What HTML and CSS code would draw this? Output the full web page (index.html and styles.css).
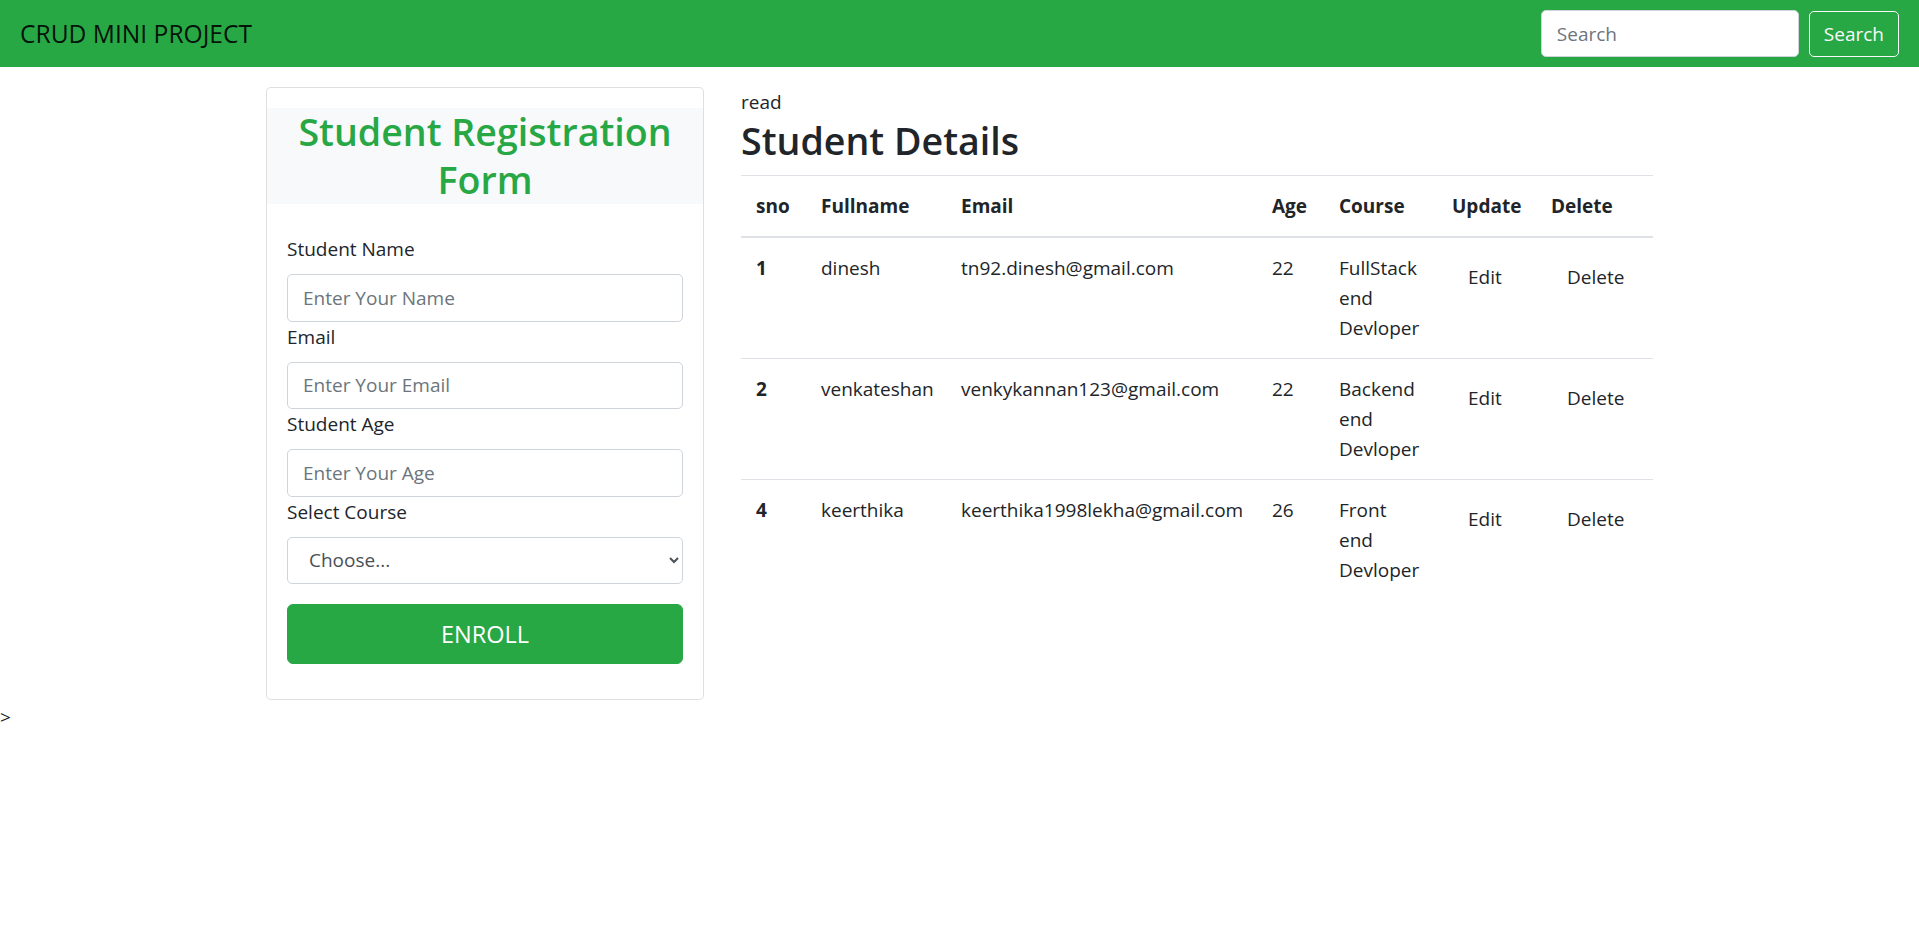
FILE: index.html
```html
<!DOCTYPE html>
<html lang="en">
<head>
<meta charset="utf-8">
<title>CRUD MINI PROJECT</title>
<link rel="stylesheet" href="styles.css">
</head>
<body>
<nav class="navbar">
  <span class="brand">CRUD MINI PROJECT</span>
  <form class="search-form">
    <input class="search-input" type="search" placeholder="Search">
    <button class="search-btn" type="button">Search</button>
  </form>
</nav>

<div class="container">
  <div class="card">
    <h2 class="card-title">Student Registration Form</h2>
    <form class="reg-form">
      <label class="field-label">Student Name</label>
      <input class="field" type="text" placeholder="Enter Your Name">
      <label class="field-label">Email</label>
      <input class="field" type="text" placeholder="Enter Your Email">
      <label class="field-label">Student Age</label>
      <input class="field" type="text" placeholder="Enter Your Age">
      <label class="field-label">Select Course</label>
      <select class="field select">
        <option>Choose...</option>
      </select>
      <button class="enroll" type="button">ENROLL</button>
    </form>
  </div>

  <div class="details">
    <p class="read">read</p>
    <h2 class="details-title">Student Details</h2>
    <table class="table">
      <colgroup>
        <col class="c-sno"><col class="c-name"><col class="c-email"><col class="c-age"><col class="c-course"><col class="c-update"><col class="c-delete">
      </colgroup>
      <thead>
        <tr><th>sno</th><th>Fullname</th><th>Email</th><th>Age</th><th>Course</th><th>Update</th><th>Delete</th></tr>
      </thead>
      <tbody>
        <tr>
          <td class="num">1</td><td>dinesh</td><td>tn92.dinesh@gmail.com</td><td>22</td><td>FullStack end Devloper</td>
          <td><button class="link-btn" type="button">Edit</button></td><td><button class="link-btn" type="button">Delete</button></td>
        </tr>
        <tr>
          <td class="num">2</td><td>venkateshan</td><td>venkykannan123@gmail.com</td><td>22</td><td>Backend end Devloper</td>
          <td><button class="link-btn" type="button">Edit</button></td><td><button class="link-btn" type="button">Delete</button></td>
        </tr>
        <tr>
          <td class="num">4</td><td>keerthika</td><td>keerthika1998lekha@gmail.com</td><td>26</td><td>Front end Devloper</td>
          <td><button class="link-btn" type="button">Edit</button></td><td><button class="link-btn" type="button">Delete</button></td>
        </tr>
      </tbody>
    </table>
  </div>
</div>
<div class="stray">&gt;</div>
</body>
</html>
```

FILE: styles.css
```css
* { box-sizing: border-box; }

html, body {
  margin: 0;
  padding: 0;
  background: #fff;
}

body {
  font-family: "Open Sans", "Noto Sans", sans-serif;
  font-size: 19px;
  line-height: 30px;
  color: #212529;
}

/* navbar */
.navbar {
  display: flex;
  align-items: center;
  justify-content: space-between;
  background: #28a745;
  padding: 10px 20px;
}

.brand {
  font-size: 24.6px;
  line-height: 37px;
  color: rgba(0, 0, 0, 0.9);
}

.search-form {
  display: flex;
  align-items: center;
  gap: 10px;
  margin: 0;
}

.search-input {
  width: 258px;
  height: 47px;
  border: 1px solid #ced4da;
  border-radius: 5px;
  padding: 0 15px;
  font-family: inherit;
  font-size: 19px;
  color: #495057;
  background: #fff;
}

.search-input::placeholder,
.field::placeholder {
  color: #6c757d;
}

.search-btn {
  height: 46px;
  padding: 0 14px;
  border: 1px solid #f8f9fa;
  border-radius: 5px;
  background: transparent;
  color: #f8f9fa;
  font-family: inherit;
  font-size: 19px;
}

/* layout */
.container {
  width: 1387px;
  margin: 20px auto 0;
  display: flex;
  align-items: flex-start;
  gap: 37px;
}

/* card */
.card {
  width: 438px;
  flex: none;
  border: 1px solid rgba(0, 0, 0, 0.125);
  border-radius: 5px;
  padding-top: 20px;
  background: #fff;
}

.card-title {
  margin: 0;
  background: #f8f9fa;
  color: #28a745;
  font-size: 37.6px;
  line-height: 48px;
  font-weight: 600;
  text-align: center;
}

.reg-form {
  display: flex;
  flex-direction: column;
  padding: 30px 20px 35px;
  margin: 0;
}

.field-label {
  display: block;
  line-height: 30px;
  margin-bottom: 10px;
}

.field {
  display: block;
  width: 100%;
  height: 47.5px;
  border: 1px solid #ced4da;
  border-radius: 5px;
  padding: 0 15px;
  font-family: inherit;
  font-size: 19px;
  color: #495057;
  background: #fff;
}

.select {
  padding-left: 17px;
  color: #495057;
}

.enroll {
  margin-top: 20px;
  width: 100%;
  height: 60px;
  border: 1px solid #28a745;
  border-radius: 6px;
  background: #28a745;
  color: #fff;
  font-family: inherit;
  font-size: 23.5px;
}

/* details */
.details {
  flex: 1;
  min-width: 0;
}

.read {
  margin: 0;
  line-height: 30px;
}

.details-title {
  margin: 0 0 10px;
  font-size: 37.6px;
  line-height: 48px;
  font-weight: 600;
}

.table {
  width: 100%;
  border-collapse: collapse;
  table-layout: fixed;
}

.c-sno { width: 65px; }
.c-name { width: 140px; }
.c-email { width: 311px; }
.c-age { width: 67px; }
.c-course { width: 113px; }
.c-update { width: 99px; }
.c-delete { width: 117px; }

.table th {
  text-align: left;
  font-weight: 700;
  padding: 15px;
  line-height: 30px;
  border-top: 1px solid #dee2e6;
  border-bottom: 2px solid #dee2e6;
  vertical-align: bottom;
  white-space: nowrap;
}

.table td {
  padding: 15px;
  line-height: 30px;
  border-top: 1px solid #dee2e6;
  vertical-align: top;
}

.table td.num {
  font-weight: 700;
}

.link-btn {
  padding: 7.5px 15px;
  border: 1px solid transparent;
  border-radius: 5px;
  background: transparent;
  color: #212529;
  font-family: inherit;
  font-size: 19px;
  line-height: 30px;
}

.stray {
  margin-top: 2px;
  line-height: 30px;
}
```
